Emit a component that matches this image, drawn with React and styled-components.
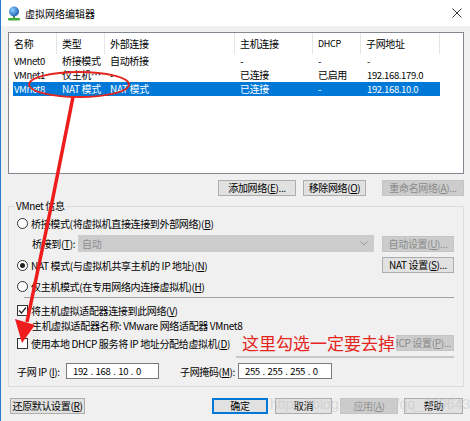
import styled, { createGlobalStyle } from "styled-components";

const Global = createGlobalStyle`
  body {
    margin: 0;
    font-family: "Noto Sans CJK SC", "Noto Sans", sans-serif;
    font-size: 10px;
    letter-spacing: -0.35px;
    color: #000;
  }
`;

const Window = styled.div`
  position: relative;
  width: 470px;
  height: 421px;
  box-sizing: border-box;
  background: #f0f0f0;
  border-left: 1px solid #2b79c9;
  overflow: hidden;
`;

const TitleBar = styled.div`
  height: 26px;
  background: #fff;
  display: flex;
  align-items: center;
  padding-left: 7px;
`;

const Title = styled.span`
  margin-left: 5px;
  font-size: 10px;
  letter-spacing: 0;
  flex: 1;
`;

const Close = styled.svg`
  width: 10px;
  height: 10px;
  margin-right: 8px;
`;

const Body = styled.div`
  padding: 6px 6px 0 7px;
`;

const ListView = styled.div`
  height: 142px;
  box-sizing: border-box;
  border: 1px solid #828790;
  background: #fff;
`;

const Header = styled.div`
  display: flex;
  height: 21px;
`;

const HeadCell = styled.div`
  width: ${(p) => p.$w}px;
  flex: ${(p) => (p.$w ? "none" : 1)};
  box-sizing: border-box;
  padding-left: 5px;
  line-height: 21px;
  border-right: ${(p) => (p.$w ? "1px solid #e5e5e5" : "none")};
  font-size: ${(p) => (p.$small ? 9 : 10)}px;
`;

const Row = styled.div`
  display: flex;
  height: 14px;
  margin-left: 4px;
  width: 427px;
  line-height: 14px;
  background: ${(p) => (p.$sel ? "#0078d7" : "transparent")};
  color: ${(p) => (p.$sel ? "#fff" : "#000")};
`;

const Cell = styled.div`
  width: ${(p) => p.$w}px;
  box-sizing: border-box;
  padding-left: ${(p) => p.$pad}px;
  white-space: nowrap;
  overflow: hidden;
  font-size: ${(p) => (p.$latin ? 9.5 : 10)}px;
`;

const ButtonBar = styled.div`
  display: flex;
  justify-content: flex-end;
  margin-top: 6px;
`;

const Btn = styled.button`
  width: ${(p) => p.$w}px;
  height: 16px;
  margin-left: ${(p) => p.$ml || 0}px;
  padding: 0;
  box-sizing: border-box;
  font-family: "Noto Sans CJK SC", "Noto Sans", sans-serif;
  font-size: 10px;
  letter-spacing: -0.35px;
  line-height: 14px;
  white-space: nowrap;
  overflow: hidden;
  color: ${(p) => (p.disabled ? "#8a8a8a" : "#000")};
  background: ${(p) => (p.disabled ? "#cccccc" : "#e1e1e1")};
  border: 1px solid
    ${(p) => (p.$primary ? "#0078d7" : p.disabled ? "#c4c4c4" : "#adadad")};
  box-shadow: ${(p) => (p.$primary ? "inset 0 0 0 1px #0078d7" : "none")};
`;

const Group = styled.fieldset`
  margin: 3px 0 0;
  padding: 1px 9px 0 8px;
  height: 188px;
  box-sizing: border-box;
  border: 1px solid #dcdcdc;
  min-width: 0;
`;

const Legend = styled.legend`
  padding: 0 1px;
  margin-left: -2px;
  line-height: 14px;
  font-size: 10px;
`;

const Line = styled.div`
  display: flex;
  align-items: center;
  height: ${(p) => p.$h}px;
  padding-left: ${(p) => p.$indent || 0}px;
  margin-top: ${(p) => p.$mt || 0}px;
`;

const Label = styled.span`
  flex: ${(p) => (p.$grow ? 1 : "none")};
  width: ${(p) => (p.$w ? `${p.$w}px` : "auto")};
  white-space: nowrap;
  margin-left: ${(p) => p.$ml || 0}px;
`;

const Radio = styled.span`
  width: 11px;
  height: 11px;
  box-sizing: border-box;
  border: 1px solid #333;
  border-radius: 50%;
  background: #fff;
  margin-right: 3px;
  display: flex;
  align-items: center;
  justify-content: center;
  &::after {
    content: "";
    width: 5px;
    height: 5px;
    border-radius: 50%;
    background: ${(p) => (p.$on ? "#222" : "transparent")};
  }
`;

const Check = styled.span`
  width: 11px;
  height: 11px;
  box-sizing: border-box;
  border: 1px solid #333;
  background: #fff;
  margin-right: 3px;
  display: flex;
  align-items: center;
  justify-content: center;
`;

const Select = styled.div`
  flex: 1;
  height: 17px;
  margin-right: 8px;
  background: #cccccc;
  color: #8d8d8d;
  display: flex;
  align-items: center;
  padding: 0 6px 0 4px;
  font-size: 10px;
`;

const Separator = styled.div`
  height: 1px;
  background: #a0a0a0;
  margin: 1px 0 0 7px;
`;

const Input = styled.div`
  width: ${(p) => p.$w}px;
  height: 16px;
  box-sizing: border-box;
  border: 1px solid #7a7a7a;
  background: #fff;
  padding-left: 6px;
  line-height: 14px;
  font-size: 9.5px;
  margin-left: ${(p) => p.$ml || 0}px;
  word-spacing: 1px;
`;

const Footer = styled.div`
  display: flex;
  margin-top: 11px;
  padding-left: 2px;
`;

const Key = styled.u`
  text-underline-offset: 1px;
`;

const Overlay = styled.svg`
  position: absolute;
  left: 0;
  top: 0;
  pointer-events: none;
`;

const Note = styled.div`
  position: absolute;
  left: 240px;
  top: 332px;
  font-size: 17px;
  line-height: 22px;
  letter-spacing: 0;
  color: #e4261c;
  background: #f0f0f0;
  padding: 0 1px;
`;

const Watermark = styled.div`
  position: absolute;
  left: 269px;
  top: 396px;
  font-family: "Liberation Sans", sans-serif;
  font-size: 14.5px;
  letter-spacing: -0.2px;
  color: rgba(200, 200, 200, 0.6);
  pointer-events: none;
  white-space: nowrap;
`;

const heads = [
  { t: "名称", w: 48 },
  { t: "类型", w: 48 },
  { t: "外部连接", w: 130 },
  { t: "主机连接", w: 78 },
  { t: "DHCP", w: 48, small: true },
  { t: "子网地址", w: 79 },
  { t: "" },
];

const widths = [44, 48, 130, 78, 48, 79];

const rows = [
  ["VMnet0", "桥接模式", "自动桥接", "-", "-", "-"],
  ["VMnet1", "仅主机…", "-", "已连接", "已启用", "192.168.179.0"],
  ["VMnet8", "NAT 模式", "NAT 模式", "已连接", "-", "192.168.10.0"],
];

function CheckMark() {
  return (
    <svg width="9" height="9" viewBox="0 0 9 9">
      <path d="M1 4.5 L3.5 7 L8 1.5" fill="none" stroke="#222" strokeWidth="1.2" />
    </svg>
  );
}

function NetIcon() {
  return (
    <svg width="12" height="15" viewBox="0 0 12 15">
      <defs>
        <radialGradient id="g" cx="0.35" cy="0.35" r="0.7">
          <stop offset="0" stopColor="#8fd0ff" />
          <stop offset="1" stopColor="#1a5fb4" />
        </radialGradient>
      </defs>
      <rect x="5" y="9" width="2" height="3" fill="#4a8a3a" />
      <rect x="0" y="12" width="12" height="2.5" rx="1" fill="#3fae3a" />
      <circle cx="6" cy="5.5" r="5" fill="url(#g)" />
    </svg>
  );
}

export default function App() {
  return (
    <Window>
      <Global />
      <TitleBar>
        <NetIcon />
        <Title>虚拟网络编辑器</Title>
        <Close viewBox="0 0 10 10">
          <path d="M0.5 0.5 L9.5 9.5 M9.5 0.5 L0.5 9.5" stroke="#222" strokeWidth="0.9" />
        </Close>
      </TitleBar>
      <Body>
        <ListView>
          <Header>
            {heads.map((h, i) => (
              <HeadCell key={i} $w={h.w} $small={h.small}>
                {h.t}
              </HeadCell>
            ))}
          </Header>
          {rows.map((r, i) => (
            <Row key={i} $sel={i === 2}>
              {r.map((c, j) => (
                <Cell
                  key={j}
                  $w={widths[j]}
                  $pad={j === 0 ? 1 : j === 5 ? 6 : 5}
                  $latin={j === 0 || j === 5}
                >
                  {c}
                </Cell>
              ))}
            </Row>
          ))}
        </ListView>

        <ButtonBar>
          <Btn $w={78}>
            添加网络(<Key>E</Key>)...
          </Btn>
          <Btn $w={63} $ml={7}>
            移除网络(<Key>O</Key>)
          </Btn>
          <Btn $w={82} $ml={16} disabled>
            重命名网络(<Key>A</Key>)...
          </Btn>
        </ButtonBar>

        <Group>
          <Legend>VMnet 信息</Legend>
          <Line $h={19}>
            <Radio />
            <Label>
              桥接模式(将虚拟机直接连接到外部网络)(<Key>B</Key>)
            </Label>
          </Line>
          <Line $h={21} $indent={15}>
            <Label $w={46}>
              桥接到(<Key>T</Key>):
            </Label>
            <Select>
              <Label $grow>自动</Label>
              <svg width="8" height="5" viewBox="0 0 8 5">
                <path d="M0.5 0.5 L4 4 L7.5 0.5" fill="none" stroke="#999" />
              </svg>
            </Select>
            <Btn $w={72} disabled>
              自动设置(<Key>U</Key>)...
            </Btn>
          </Line>
          <Line $h={22}>
            <Radio $on />
            <Label $grow>
              NAT 模式(与虚拟机共享主机的 IP 地址)(<Key>N</Key>)
            </Label>
            <Btn $w={72}>
              NAT 设置(<Key>S</Key>)...
            </Btn>
          </Line>
          <Line $h={20}>
            <Radio />
            <Label>
              仅主机模式(在专用网络内连接虚拟机)(<Key>H</Key>)
            </Label>
          </Line>
          <Separator />
          <Line $h={16} $mt={4}>
            <Check>
              <CheckMark />
            </Check>
            <Label>
              将主机虚拟适配器连接到此网络(<Key>V</Key>)
            </Label>
          </Line>
          <Line $h={14} $indent={15}>
            <Label>主机虚拟适配器名称: VMware 网络适配器 VMnet8</Label>
          </Line>
          <Line $h={18} $mt={2}>
            <Check />
            <Label $grow>
              使用本地 DHCP 服务将 IP 地址分配给虚拟机(<Key>D</Key>)
            </Label>
            <Btn $w={72} disabled>
              DHCP 设置(<Key>P</Key>)...
            </Btn>
          </Line>
          <Line $h={18} $mt={10}>
            <Label $w={49}>
              子网 IP (<Key>I</Key>):
            </Label>
            <Input $w={93}>192 . 168 . 10 . 0</Input>
            <Label $ml={21} $w={58}>
              子网掩码(<Key>M</Key>):
            </Label>
            <Input $w={94}>255 . 255 . 255 . 0</Input>
          </Line>
        </Group>

        <Footer>
          <Btn $w={75}>
            还原默认设置(<Key>R</Key>)
          </Btn>
          <Btn $w={56} $ml={127} $primary>
            确定
          </Btn>
          <Btn $w={57} $ml={7}>
            取消
          </Btn>
          <Btn $w={58} $ml={8} disabled>
            应用(<Key>A</Key>)
          </Btn>
          <Btn $w={59} $ml={6}>
            帮助
          </Btn>
        </Footer>
      </Body>

      <Note>这里勾选一定要去掉</Note>
      <Overlay width="470" height="421">
        <line x1="235" y1="357" x2="453" y2="357" stroke="#a0a0a0" strokeWidth="1" />
        <ellipse
          cx="78"
          cy="84.5"
          rx="50"
          ry="12.5"
          fill="none"
          stroke="#e2251e"
          strokeWidth="1.8"
        />
        <path d="M72 97 Q50 210 26 322" fill="none" stroke="#ee1c1c" strokeWidth="3.5" />
        <polygon points="21,343 14,319 34,325" fill="#ee1c1c" />
      </Overlay>
      <Watermark>https://blog.csdn.net/qq_33964382</Watermark>
    </Window>
  );
}
